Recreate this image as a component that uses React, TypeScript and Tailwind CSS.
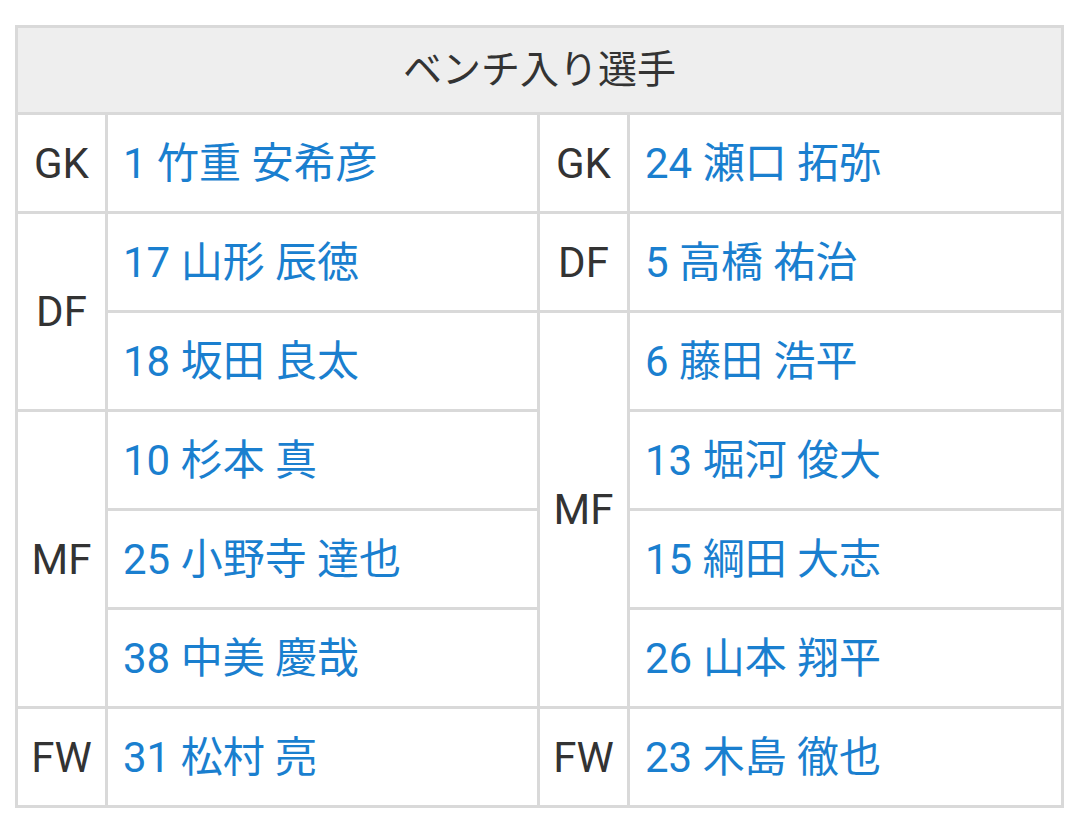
const FONT = { fontFamily: "Roboto, 'Noto Sans CJK JP', sans-serif" };

type Cell = { text: string; pos?: boolean; col: string; row: string };

const CELLS: Cell[] = [
  // left half
  { text: "GK", pos: true, col: "col-start-1", row: "row-start-2" },
  { text: "1 竹重 安希彦", col: "col-start-2", row: "row-start-2" },
  { text: "DF", pos: true, col: "col-start-1", row: "row-start-3 row-span-2" },
  { text: "17 山形 辰徳", col: "col-start-2", row: "row-start-3" },
  { text: "18 坂田 良太", col: "col-start-2", row: "row-start-4" },
  { text: "MF", pos: true, col: "col-start-1", row: "row-start-5 row-span-3" },
  { text: "10 杉本 真", col: "col-start-2", row: "row-start-5" },
  { text: "25 小野寺 達也", col: "col-start-2", row: "row-start-6" },
  { text: "38 中美 慶哉", col: "col-start-2", row: "row-start-7" },
  { text: "FW", pos: true, col: "col-start-1", row: "row-start-8" },
  { text: "31 松村 亮", col: "col-start-2", row: "row-start-8" },
  // right half
  { text: "GK", pos: true, col: "col-start-3", row: "row-start-2" },
  { text: "24 瀬口 拓弥", col: "col-start-4", row: "row-start-2" },
  { text: "DF", pos: true, col: "col-start-3", row: "row-start-3" },
  { text: "5 高橋 祐治", col: "col-start-4", row: "row-start-3" },
  { text: "MF", pos: true, col: "col-start-3", row: "row-start-4 row-span-4" },
  { text: "6 藤田 浩平", col: "col-start-4", row: "row-start-4" },
  { text: "13 堀河 俊大", col: "col-start-4", row: "row-start-5" },
  { text: "15 綱田 大志", col: "col-start-4", row: "row-start-6" },
  { text: "26 山本 翔平", col: "col-start-4", row: "row-start-7" },
  { text: "FW", pos: true, col: "col-start-3", row: "row-start-8" },
  { text: "23 木島 徹也", col: "col-start-4", row: "row-start-8" },
];

export default function App() {
  return (
    <div className="min-h-screen bg-white pt-[25px] pl-[15px]" style={FONT}>
      <div className="grid w-[1049px] grid-cols-[87px_429px_87px_431px] grid-rows-[84px_repeat(7,96px)] gap-[3px] bg-[#d9d9d9] p-[3px]">
        <div className="col-span-4 row-start-1 flex items-center justify-center bg-[#eeeeee] text-[39px] text-[#333333]">
          ベンチ入り選手
        </div>
        {CELLS.map((c, i) => (
          <div
            key={i}
            className={
              c.pos
                ? `${c.col} ${c.row} flex items-center justify-center bg-white text-[42px] text-[#333333]`
                : `${c.col} ${c.row} flex items-center bg-white pl-[15px] text-[42px] text-[#1a7fcf]`
            }
          >
            {c.text}
          </div>
        ))}
      </div>
    </div>
  );
}
